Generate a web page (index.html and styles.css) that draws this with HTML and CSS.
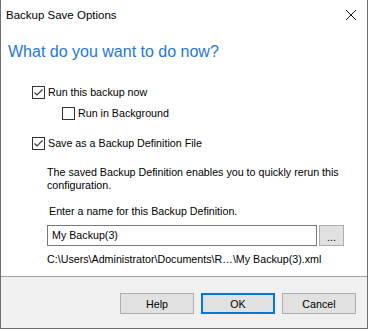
FILE: index.html
```html
<!DOCTYPE html>
<html lang="en">
<head>
  <meta charset="UTF-8" />
  <title>Backup Save Options</title>
  <link rel="stylesheet" href="styles.css">
</head>
<body>

  <div class="window">
    <div class="titlebar">
      <span class="title">Backup Save Options</span>
      <span class="close">
        <svg width="12" height="12" viewBox="0 0 12 12">
          <path d="M1 1 L11 11 M11 1 L1 11" stroke="#111" stroke-width="1" fill="none" />
        </svg>
      </span>
    </div>

    <div class="content">
      <h1 class="instruction">What do you want to do now?</h1>

      <label class="check">
        <span class="box checked">
          <svg width="11" height="11" viewBox="0 0 11 11"><path d="M1.5 5.5 L4 8 L9.5 2.5" stroke="#333" stroke-width="1.1" fill="none" /></svg>
        </span>
        Run this backup now
      </label>

      <label class="check sub">
        <span class="box"></span>
        Run in Background
      </label>

      <label class="check third">
        <span class="box checked">
          <svg width="11" height="11" viewBox="0 0 11 11"><path d="M1.5 5.5 L4 8 L9.5 2.5" stroke="#333" stroke-width="1.1" fill="none" /></svg>
        </span>
        Save as a Backup Definition File
      </label>

      <div class="definition">
        <p class="desc">The saved Backup Definition enables you to quickly rerun this configuration.</p>
        <p class="prompt">Enter a name for this Backup Definition.</p>
        <div class="name-row">
          <div class="name-input">My Backup(3)</div>
          <button class="browse">...</button>
        </div>
        <p class="path">C:\Users\Administrator\Documents\R…\My Backup(3).xml</p>
      </div>
    </div>

    <div class="footer">
      <button class="btn">Help</button>
      <button class="btn default">OK</button>
      <button class="btn">Cancel</button>
    </div>
  </div>

</body>
</html>
```

FILE: styles.css
```css
*, *::before, *::after {
  box-sizing: border-box;
}

body {
  margin: 0;
  background: #fff;
  font-family: 'Liberation Sans', Arial, sans-serif;
  color: #000;
}

.window {
  width: 368px;
  height: 329px;
  display: flex;
  flex-direction: column;
  background: #fff;
  border-left: 1px solid #6f6f6f;
  border-right: 1px solid #6f6f6f;
  border-bottom: 1px solid #6f6f6f;
}

.titlebar {
  height: 30px;
  display: flex;
  align-items: center;
  justify-content: space-between;
  padding-left: 5px;
}

.title {
  font-size: 11.5px;
}

.close {
  width: 46px;
  height: 30px;
  display: flex;
  align-items: center;
  justify-content: center;
  padding-left: 14px;
}

.content {
  flex: 1;
  padding-left: 31px;
}

.instruction {
  margin: 12px 0 0 -24px;
  font-size: 16px;
  font-weight: normal;
  line-height: 20px;
  color: #1e78d8;
}

.check {
  display: flex;
  align-items: center;
  gap: 3px;
  height: 16px;
  font-size: 10.7px;
  margin-top: 22px;
}

.check.sub {
  margin-top: 5px;
  padding-left: 30px;
}

.check.third {
  margin-top: 14px;
}

.box {
  width: 13px;
  height: 13px;
  border: 1px solid #333;
  background: #fff;
  display: flex;
  align-items: center;
  justify-content: center;
}

.definition {
  padding-left: 15px;
  font-size: 10.7px;
}

.definition p {
  margin: 0;
}

.desc {
  margin-top: 15px !important;
  line-height: 13px;
  width: 300px;
}

.prompt {
  margin-top: 11px !important;
  line-height: 16px;
  padding-left: 2px;
}

.name-row {
  display: flex;
  gap: 2px;
  margin-top: 6px;
}

.name-input {
  width: 270px;
  height: 21px;
  border: 1px solid #7a7a7a;
  padding-left: 4px;
  line-height: 19px;
}

.browse {
  width: 25px;
  height: 21px;
  border: 1px solid #adadad;
  background: #e1e1e1;
  font-family: inherit;
  font-size: 10.7px;
  padding: 0;
  line-height: 22px;
}

.path {
  margin-top: 5px !important;
  line-height: 16px;
}

.footer {
  height: 52px;
  border-top: 1px solid #a0a0a0;
  background: #f0f0f0;
  display: flex;
  justify-content: flex-end;
  align-items: flex-start;
  gap: 7px;
  padding: 16px 11px 0 0;
}

.btn {
  width: 74px;
  height: 21px;
  border: 1px solid #adadad;
  background: #e1e1e1;
  font-family: inherit;
  font-size: 10.7px;
  color: #000;
  padding: 0;
}

.btn.default {
  border: 2px solid #0078d7;
}
```
